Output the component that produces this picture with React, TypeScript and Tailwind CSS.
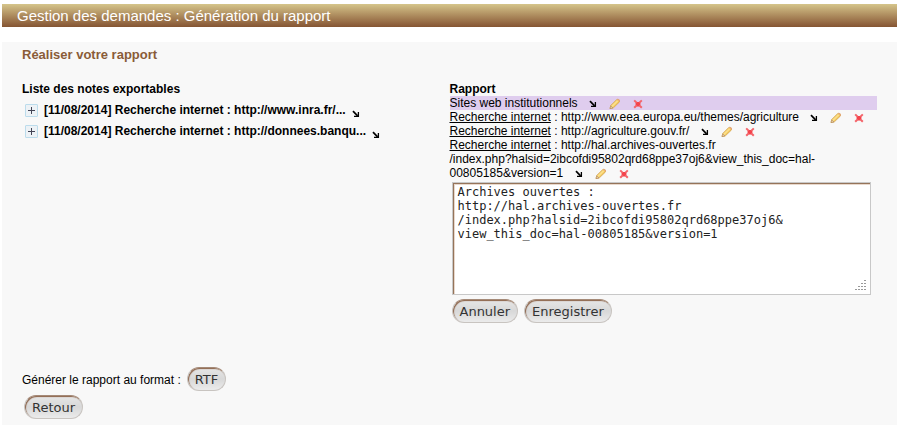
import React from "react";

const sans = "font-['Liberation_Sans',Arial,sans-serif]";

function ArrowIcon() {
  return (
    <svg width="8" height="8" viewBox="0 0 8 8" aria-hidden="true">
      <path d="M1 1.2L5.6 5.8" stroke="#000" strokeWidth="1.7" fill="none" />
      <path d="M6.4 2V6.4H2" stroke="#000" strokeWidth="1.3" fill="none" />
    </svg>
  );
}

function PencilIcon() {
  return (
    <svg width="12" height="12" viewBox="0 0 12 12" aria-hidden="true">
      <path d="M1 10.6L1.8 7.4L7.6 1.7Q9 0.6 10.2 1.8Q11.2 3 10.2 4.2L4.4 9.8Z" fill="#f4cb5c" stroke="#d6a85c" strokeWidth="0.9" />
      <path d="M2.6 8.6L8.6 2.8" stroke="#fbdf8c" strokeWidth="1.6" />
      <path d="M8.2 1.5Q9.2 0.8 10.2 1.8Q11.2 3 10.4 3.8Z" fill="#eba58a" />
      <path d="M1 10.6L1.7 7.8L4 10Z" fill="#ecd2ae" stroke="#b08a5a" strokeWidth="0.6" />
    </svg>
  );
}

function CrossIcon() {
  return (
    <svg width="10" height="10" viewBox="0 0 10 10" aria-hidden="true">
      <path d="M1.2 1.4L8.8 8.8M8.8 1.4L1.2 8.8" stroke="#f4646a" strokeWidth="2" />
      <path d="M2.6 5H7.4M5 3V7.4" stroke="#f4444c" strokeWidth="2.2" />
    </svg>
  );
}

function Actions() {
  return (
    <span className="ml-2 inline-flex h-3 items-center gap-3 align-top">
      <button type="button" aria-label="Déplacer" className="mt-1"><ArrowIcon /></button>
      <button type="button" aria-label="Modifier" className="mt-1"><PencilIcon /></button>
      <button type="button" aria-label="Supprimer" className="mt-1"><CrossIcon /></button>
    </span>
  );
}

function PillButton({ children }: { children: React.ReactNode }) {
  return (
    <button
      type="button"
      className="h-6 rounded-full border border-[#c8c4c0] border-t-[#a58a78] bg-linear-to-b from-[#e6e6e6] via-[#d8d8d8] to-[#ebebeb] px-[7px] pt-px font-['DejaVu_Sans',sans-serif] text-[13px] leading-[22px] text-[#333] shadow-[inset_1px_1px_1px_#8b6248]"
    >
      {children}
    </button>
  );
}

function Note({ title }: { title: string }) {
  return (
    <li className="flex h-[21px] items-center pl-[3px]">
      <button type="button" aria-label="Déplier" className="mt-px mr-1.5">
        <svg width="13" height="13" viewBox="0 0 13 13" aria-hidden="true">
          <rect x="0.5" y="0.5" width="12" height="12" rx="0.5" fill="#edf2f6" stroke="#bcdcec" />
          <path d="M6.5 3V10M3 6.5H10" stroke="#445" strokeWidth="1" />
        </svg>
      </button>
      <strong>{title}</strong>
      <button type="button" aria-label="Ajouter au rapport" className="mt-2 ml-1.5"><ArrowIcon /></button>
    </li>
  );
}

const source = <u>Recherche internet</u>;

export default function App() {
  return (
    <div className={`flex min-h-screen flex-col bg-white pt-1 pr-[3px] pl-0.5 text-[12px] leading-[14px] text-black ${sans}`}>
      <h1 className="mb-[15px] h-[23px] bg-linear-to-b from-[#d5c58b] to-[#855533] px-[15px] text-[15px] leading-[23px] text-white">
        Gestion des demandes : Génération du rapport
      </h1>
      <main className="flex-1 bg-[#f8f8f8] px-5 pt-[5px] pb-1.5">
        <h2 className="mb-[19px] text-[13px] leading-4 font-bold text-[#8a5c38]">Réaliser votre rapport</h2>
        <div className="grid grid-cols-2">
          <section>
            <h3 className="mb-[3px] font-bold">Liste des notes exportables</h3>
            <ul>
              <Note title="[11/08/2014] Recherche internet : http://www.inra.fr/..." />
              <Note title="[11/08/2014] Recherche internet : http://donnees.banqu..." />
            </ul>
          </section>
          <section>
            <h3 className="font-bold">Rapport</h3>
            <ul>
              <li className="bg-[#dfcdee]">Sites web institutionnels <Actions /></li>
              <li>{source} : http://www.eea.europa.eu/themes/agriculture <Actions /></li>
              <li>{source} : http://agriculture.gouv.fr/ <Actions /></li>
              <li>
                {source} : http://hal.archives-ouvertes.fr
                <br />
                /index.php?halsid=2ibcofdi95802qrd68ppe37oj6&amp;view_this_doc=hal-<wbr />00805185&amp;version=1 <Actions />
              </li>
            </ul>
            <div className="relative mt-0.5 mr-1.5 ml-0.5">
              <textarea
                aria-label="Note du rapport"
                rows={7}
                className="block h-[113px] w-full resize-none border border-[#c8c8c8] bg-white px-[5px] py-0.5 font-['DejaVu_Sans_Mono',monospace] text-[12px] leading-[14px] text-[#222] shadow-[inset_1px_1px_#95745a,inset_2px_2px_#e8d8cc]"
                defaultValue={"Archives ouvertes :\nhttp://hal.archives-ouvertes.fr\n/index.php?halsid=2ibcofdi95802qrd68ppe37oj6&\nview_this_doc=hal-00805185&version=1"}
              />
              <svg className="pointer-events-none absolute right-1 bottom-0.5" width="13" height="13" viewBox="0 0 13 13" fill="#999" aria-hidden="true">
                <path d="M10 0h2v1h-2zM10 3h2v1h-2zM10 6h2v1h-2zM10 9h2v1h-2zM7 3h2v1h-2zM7 6h2v1h-2zM7 9h2v1h-2zM4 6h2v1h-2zM4 9h2v1h-2zM1 9h2v1h-2z" />
              </svg>
            </div>
            <div className="mt-1 ml-0.5 flex gap-1.5">
              <PillButton>Annuler</PillButton>
              <PillButton>Enregistrer</PillButton>
            </div>
          </section>
        </div>
        <div className="mt-11 flex items-center gap-1.5">
          <span className="pt-0.5">Générer le rapport au format :</span>
          <PillButton>RTF</PillButton>
        </div>
        <div className="mt-1 ml-0.5 flex">
          <PillButton>Retour</PillButton>
        </div>
      </main>
    </div>
  );
}
